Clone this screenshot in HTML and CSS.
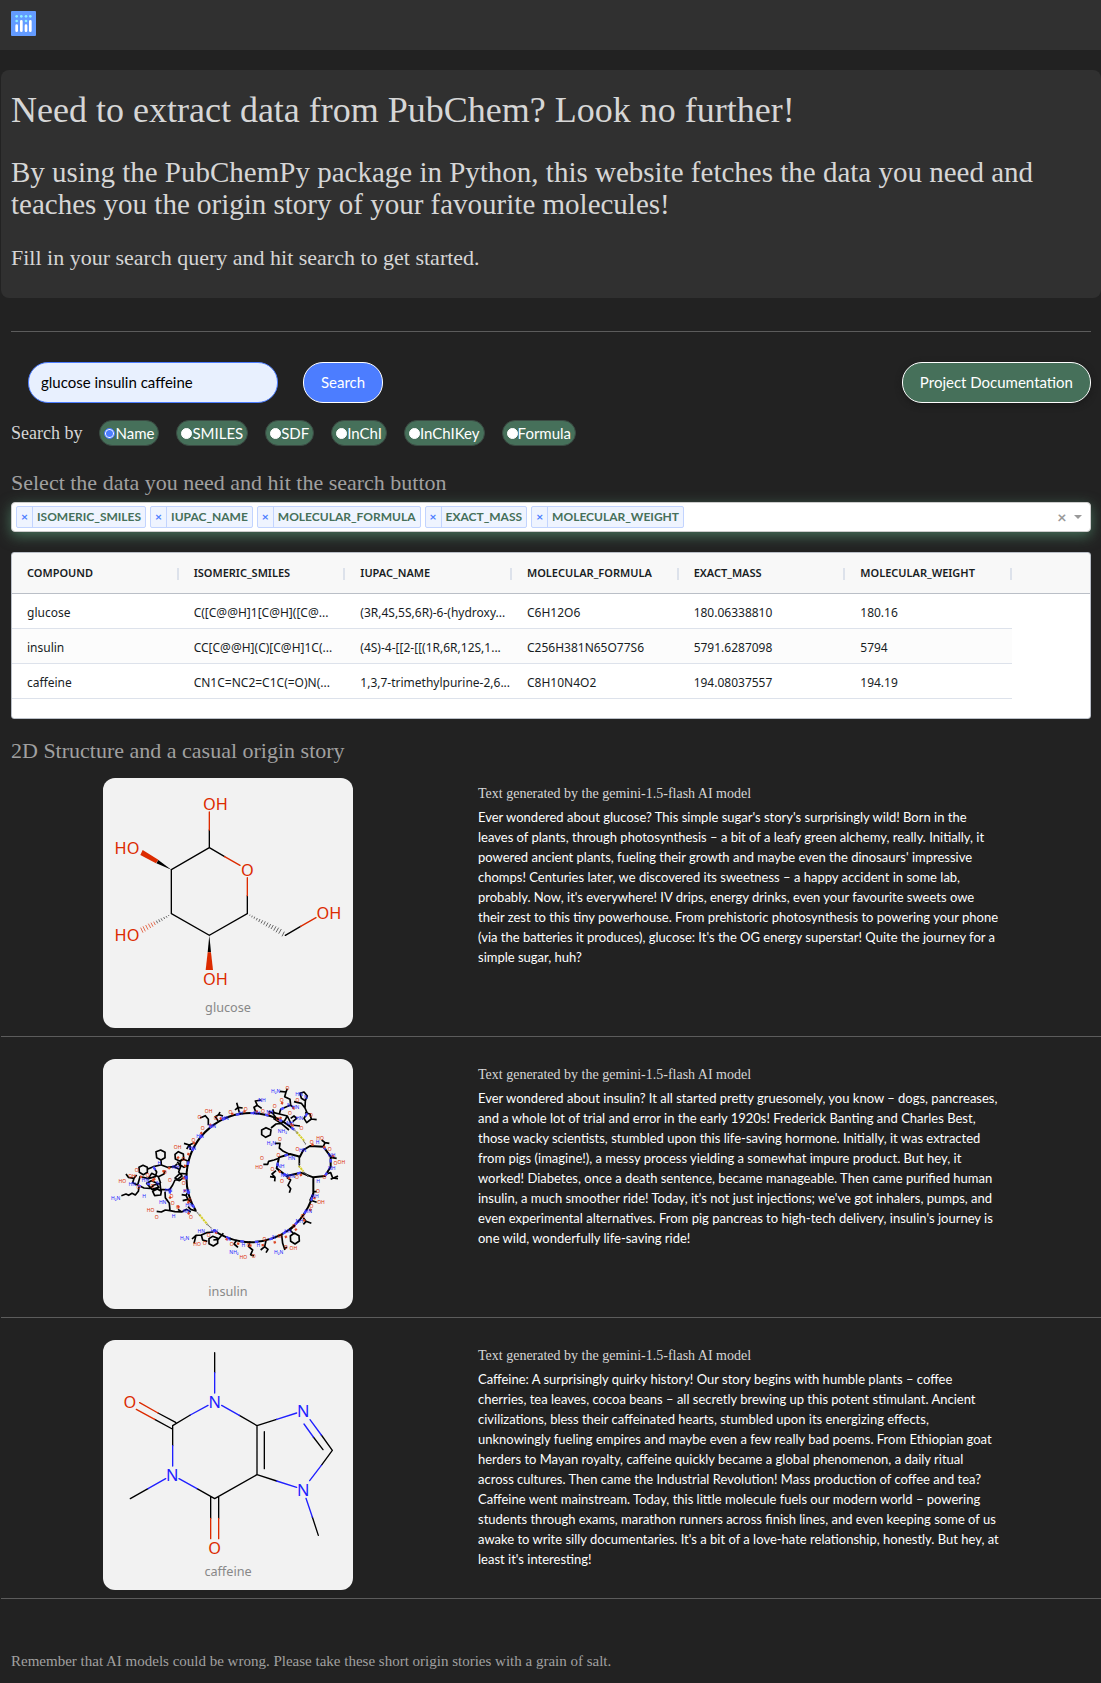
FILE: index.html
```html
<!DOCTYPE html>
<html lang="en">
<head>
<meta charset="utf-8">
<meta name="viewport" content="width=device-width, initial-scale=1">
<title>PubChem data extraction</title>
<link rel="stylesheet" href="styles.css">
</head>
<body>
<header class="topbar">
  <a href="#" class="logo" aria-label="Home">
    <svg viewBox="0 0 75 75" width="25" height="25">
      <rect width="75" height="75" rx="3" fill="#639bff"/>
      <g fill="#8ef0ff"><circle cx="17" cy="16" r="4"/><circle cx="31" cy="16" r="4"/><circle cx="45" cy="16" r="4"/><circle cx="58" cy="16" r="4"/><circle cx="17" cy="30" r="4"/><circle cx="45" cy="30" r="4"/></g>
      <path d="M17 44V59M31 31V59M45 44V59M58 31V59" stroke="#fff" stroke-width="8" stroke-linecap="round"/>
    </svg>
  </a>
</header>
<section class="hero">
  <h1>Need to extract data from PubChem? Look no further!</h1>
  <h2>By using the PubChemPy package in Python, this website fetches the data you need and teaches you the origin story of your favourite molecules!</h2>
  <p>Fill in your search query and hit search to get started.</p>
</section>
<main>
  <div class="content">
    <hr>
    <form class="search-form">
      <div class="search-row">
        <input class="query" type="text" aria-label="Search query" value="glucose insulin caffeine">
        <button class="pill search" type="button">Search</button>
        <a class="pill docs" href="#">Project Documentation</a>
      </div>
      <fieldset class="modes">
        <legend>Search by</legend>
        <label><input type="radio" name="by" checked>Name</label>
        <label><input type="radio" name="by">SMILES</label>
        <label><input type="radio" name="by">SDF</label>
        <label><input type="radio" name="by">InChI</label>
        <label><input type="radio" name="by">InChIKey</label>
        <label><input type="radio" name="by">Formula</label>
      </fieldset>
    </form>
    <h3>Select the data you need and hit the search button</h3>
    <div class="dropdown">
      <span class="tag"><button type="button" aria-label="Remove">×</button><span>ISOMERIC_SMILES</span></span>
      <span class="tag"><button type="button" aria-label="Remove">×</button><span>IUPAC_NAME</span></span>
      <span class="tag"><button type="button" aria-label="Remove">×</button><span>MOLECULAR_FORMULA</span></span>
      <span class="tag"><button type="button" aria-label="Remove">×</button><span>EXACT_MASS</span></span>
      <span class="tag"><button type="button" aria-label="Remove">×</button><span>MOLECULAR_WEIGHT</span></span>
      <button class="clear" type="button" aria-label="Clear all">×</button>
      <button class="open" type="button" aria-label="Open"></button>
    </div>
    <div class="grid">
      <table>
        <thead>
          <tr><th>COMPOUND</th><th>ISOMERIC_SMILES</th><th>IUPAC_NAME</th><th>MOLECULAR_FORMULA</th><th>EXACT_MASS</th><th>MOLECULAR_WEIGHT</th></tr>
        </thead>
        <tbody>
          <tr><td>glucose</td><td>C([C@@H]1[C@H]([C@...</td><td>(3R,4S,5S,6R)-6-(hydroxy...</td><td>C6H12O6</td><td>180.06338810</td><td>180.16</td></tr>
          <tr><td>insulin</td><td>CC[C@@H](C)[C@H]1C(...</td><td>(4S)-4-[[2-[[(1R,6R,12S,1...</td><td>C256H381N65O77S6</td><td>5791.6287098</td><td>5794</td></tr>
          <tr><td>caffeine</td><td>CN1C=NC2=C1C(=O)N(...</td><td>1,3,7-trimethylpurine-2,6...</td><td>C8H10N4O2</td><td>194.08037557</td><td>194.19</td></tr>
        </tbody>
      </table>
    </div>
    <h3>2D Structure and a casual origin story</h3>
  </div>

  <article class="story">
    <svg class="molecule" viewBox="39 39 750 750">
      <g class="bond">
        <path d="M358 248V195M358 248L404 275M358 248L244 314V446L358 511L472 446V392M586 511L632 484"/>
        <path class="o" d="M358 195V141M404 275L450 301M472 392V338M632 484L678 458"/>
      </g>
      <path class="solid" d="M244 314L205 285L199 295Z"/>
      <path class="solid-o" d="M205 284L158 255L151 270L198 295Z"/>
      <path class="solid" d="M358 511L353 562H363Z"/>
      <path class="solid-o" d="M353 562L347 615H369L363 562Z"/>
      <path class="hash" d="M480 449L479 452M487 452L485 457M494 455L492 461M502 459L499 466M510 462L506 471M518 466L513 475M526 469L521 479M534 473L528 484M542 477L536 488M550 480L543 492M558 484L551 497M566 488L558 502M574 492L566 506M583 500L576 514"/>
      <path class="hash" d="M235 450L237 453M228 453L231 458M221 456L224 462M213 460L217 467M206 463L210 471M199 467L203 475"/>
      <path class="hash o" d="M191 470L196 480M183 473L189 485M175 476L182 489M167 480L174 494M159 484L166 499M152 488L159 503"/>
      <g class="atom o">
        <text x="376" y="135">OH</text><text x="111" y="266">HO</text><text x="472" y="332">O</text>
        <text x="717" y="463">OH</text><text x="111" y="529">HO</text><text x="376" y="660">OH</text>
      </g>
      <text class="name" x="414" y="742">glucose</text>
    </svg>
    <div class="tale">
      <h4>Text generated by the gemini-1.5-flash AI model</h4>
      <p>Ever wondered about glucose? This simple sugar's story's surprisingly wild! Born in the leaves of plants, through photosynthesis – a bit of a leafy green alchemy, really. Initially, it powered ancient plants, fueling their growth and maybe even the dinosaurs' impressive chomps! Centuries later, we discovered its sweetness – a happy accident in some lab, probably. Now, it's everywhere! IV drips, energy drinks, even your favourite sweets owe their zest to this tiny powerhouse. From prehistoric photosynthesis to powering your phone (via the batteries it produces), glucose: It's the OG energy superstar! Quite the journey for a simple sugar, huh?</p>
    </div>
  </article>

  <article class="story">
    <svg class="molecule" viewBox="39 27 750 750">
      <g class="chain">
        <!-- backbone -->
        <path class="backbone" d="M612 239A193 193 0 0 0 318 483M370 540A193 193 0 0 0 670 430V382L632 368L590 378L560 355L567 322L600 312L630 320L640 300L660 288L700 290L722 320V350L705 378L670 382"/>
        <!-- side groups, top arc -->
        <path d="M355 226V208L346 197L330 204M384 212L376 200L386 194L399 198M386 194L390 186M448 188L444 172L458 174M444 172L435 180M444 172L440 158M497 185L492 172L502 166L515 175M502 166L496 153L514 150"/>
        <!-- top right cluster -->
        <path d="M550 205L573 220L597 240M573 220L558 222L543 234M515 240L528 233L543 240L541 255L527 262L515 254ZM568 192L552 188L548 178M568 192L572 178L602 165L612 175M602 165L600 148L584 140L588 126L570 124M588 126L592 116M602 205L612 198L620 205L608 215M568 192L592 198L605 225L630 228M612 155L634 160L645 174L652 190L642 205L650 218L664 207L680 209M664 207L660 192L645 188M645 174L646 152L634 145L630 130L642 126L652 138L646 152M536 184L548 190L560 206M592 198L584 212L573 220"/>
        <!-- left arc -->
        <path d="M313 278L298 285L282 280M298 285L290 297M301 300L300 285M265 305L280 312L281 326L269 333L256 327L255 313ZM280 328L292 332L293 346L282 352L271 345V334ZM292 372L270 370L255 384L268 392L285 380M303 457L294 448L278 452M294 448L288 436L275 434M288 436L292 430M262 335L272 350L266 366L276 378L262 388M252 350L262 342"/>
        <!-- left cluster -->
        <path d="M198 305L212 300L225 307V323L213 330L200 323ZM213 330L214 345L232 352L252 350L268 358M147 352L159 346L172 352V367L160 374L148 367ZM172 358L190 350L212 345M190 350L200 366L196 380L175 386L150 380L143 405L128 398L132 385L115 382L108 372M132 385L140 375M143 405L162 414L180 415L192 405L210 400L212 418L238 420L248 405L255 390L272 390M188 424L202 417L214 424L212 435L194 437ZM225 425L226 443L238 460L240 482L226 480L214 486L200 484M240 482L255 485L275 486L290 478L302 486M275 486L264 478M94 437L108 432L116 436L126 430L136 435L145 424L148 405M205 380L222 372L225 362M175 386L185 370L205 380L212 400M170 400L184 392L198 398L206 412L186 418Z"/>
        <!-- right loops -->
        <path d="M597 312L580 304L568 294L570 280L555 280M567 325L552 330L536 334L533 343L520 343M558 362L546 372L555 382L540 380M555 382L554 394M590 382L602 390L594 406L602 416L598 428M640 368L655 378M700 290L705 278L718 280M705 278L695 270M722 322L740 325M708 372L722 368L728 384L744 386M722 388L744 378M628 318V345M670 430L660 450L680 457M680 425H672"/>
        <!-- bottom arc -->
        <path d="M640 503L648 514L664 520M648 514L640 523M615 526L600 540L612 552M601 558L613 549L627 557L628 573L615 582L602 574ZM575 555L578 580L584 598L590 590M528 572L524 590L534 598L528 608M524 590L512 600M480 574L476 590L488 600L482 614L492 618M440 570L432 582L444 592M400 550L385 568L370 570M357 566L368 559L383 565V580L370 588L357 581ZM370 546L350 548L334 555L338 570L352 574M334 555L318 556L306 567M318 556L312 580M318 483L302 478L294 470"/>
      </g>
      <g class="specks-n">
        <path d="M612 239A193 193 0 0 0 318 483M370 540A193 193 0 0 0 670 430"/>
        <path d="M700 290L722 320V350L705 378M632 368L590 378L560 355L567 322L600 312M572 178L602 165M652 190L642 205L650 218M190 350L200 366L196 380M240 420L238 460M143 405L162 414M170 400L206 412"/>
      </g>
      <g class="specks-o">
        <path d="M606 225A202 202 0 0 0 300 470M376 546A186 186 0 0 0 676 432"/>
        <path d="M664 284L700 288L730 320L728 350M636 374L590 386L554 350M573 158L612 175L634 160M150 380L175 386L212 400M190 390L222 362M238 440L264 470L302 494M605 225L632 236M240 352L225 366M262 320L282 345"/>
      </g>
      <path class="sulfur" d="M620 246L644 274M626 347L640 364M328 494L352 523"/>
      <path class="faint" d="M614 240L622 250M640 272L648 284M628 340V352M640 366L655 378M318 484L330 496M350 522L366 536"/>
      <g class="tiny n">
        <text x="557" y="130">H₂N</text><text x="627" y="137">HN</text><text x="648" y="146">N</text><text x="516" y="157">NH</text>
        <text x="453" y="194">H</text><text x="405" y="211">HN</text><text x="367" y="233">HN</text><text x="330" y="263">HN</text><text x="307" y="300">HN</text>
        <text x="500" y="195">NH</text><text x="540" y="192">NH</text><text x="577" y="248">NH₂</text><text x="600" y="225">NH</text><text x="617" y="178">HN</text><text x="597" y="170">N</text><text x="629" y="210">HN</text>
        <text x="544" y="285">H₂N</text><text x="638" y="307">HN</text><text x="683" y="282">H</text><text x="725" y="321">NH</text><text x="725" y="361">NH</text><text x="684" y="398">H</text>
        <text x="605" y="329">HN</text><text x="572" y="353">NH</text><text x="583" y="380">NH</text><text x="604" y="384">HN</text>
        <text x="77" y="449">H₂N</text><text x="127" y="409">HN</text><text x="162" y="444">H</text><text x="218" y="463">HN</text><text x="251" y="504">H</text><text x="288" y="387">N</text><text x="257" y="358">NH</text><text x="208" y="346">H</text><text x="236" y="427">HN</text><text x="290" y="489">NH</text><text x="297" y="472">HN</text><text x="290" y="430">HN</text><text x="204" y="405">N</text><text x="166" y="397">HN</text>
        <text x="284" y="571">H₂N</text><text x="334" y="549">HN</text><text x="373" y="549">HN</text><text x="417" y="572">N</text><text x="432" y="612">NH₂</text><text x="460" y="591">H</text><text x="505" y="591">H</text><text x="552" y="568">N</text><text x="594" y="549">HN</text><text x="566" y="612">H₂N</text><text x="628" y="520">NH</text><text x="655" y="490">HN</text><text x="675" y="445">NH</text>
      </g>
      <g class="tiny o">
        <text x="592" y="119">O</text><text x="575" y="156">O</text><text x="554" y="174">O</text><text x="622" y="157">O</text><text x="663" y="202">O</text><text x="634" y="241">O</text><text x="600" y="195">O</text><text x="563" y="212">O</text><text x="467" y="183">O</text><text x="519" y="188">O</text><text x="421" y="191">O</text><text x="377" y="210">O</text><text x="338" y="239">O</text><text x="310" y="275">O</text>
        <text x="356" y="190">OH</text><text x="328" y="206">O</text><text x="263" y="298">OH</text><text x="280" y="332">O</text><text x="281" y="404">O</text><text x="298" y="456">O</text>
        <text x="570" y="272">O</text><text x="507" y="357">HO</text><text x="516" y="331">O</text><text x="565" y="322">O</text><text x="622" y="302">O</text><text x="665" y="281">O</text><text x="690" y="269">HO</text><text x="719" y="302">O</text><text x="754" y="342">OH</text><text x="736" y="344">O</text><text x="703" y="386">O</text><text x="621" y="386">O</text><text x="576" y="400">O</text><text x="547" y="362">O</text><text x="684" y="429">O</text><text x="693" y="461">OH</text><text x="664" y="475">O</text><text x="638" y="505">O</text>
        <text x="97" y="399">HO</text><text x="140" y="367">O</text><text x="126" y="383">OH</text><text x="145" y="417">O</text><text x="173" y="380">O</text><text x="225" y="373">O</text><text x="240" y="395">O</text><text x="244" y="444">O</text><text x="182" y="485">HO</text><text x="200" y="506">O</text><text x="264" y="477">O</text><text x="303" y="507">O</text><text x="248" y="464">O</text><text x="187" y="414">O</text>
        <text x="321" y="587">HO</text><text x="344" y="584">O</text><text x="356" y="562">O</text><text x="425" y="588">O</text><text x="476" y="591">O</text><text x="460" y="627">HO</text><text x="491" y="625">O</text><text x="523" y="573">O</text><text x="568" y="564">O</text><text x="588" y="596">O</text><text x="610" y="599">OH</text><text x="612" y="533">O</text>
      </g>
      <text class="name" x="414" y="739">insulin</text>
    </svg>
    <div class="tale">
      <h4>Text generated by the gemini-1.5-flash AI model</h4>
      <p>Ever wondered about insulin? It all started pretty gruesomely, you know – dogs, pancreases, and a whole lot of trial and error in the early 1920s! Frederick Banting and Charles Best, those wacky scientists, stumbled upon this life-saving hormone. Initially, it was extracted from pigs (imagine!), a messy process yielding a somewhat impure product. But hey, it worked! Diabetes, once a death sentence, became manageable. Then came purified human insulin, a much smoother ride! Today, it's not just injections; we've got inhalers, pumps, and even experimental alternatives. From pig pancreas to high-tech delivery, insulin's journey is one wild, wonderfully life-saving ride!</p>
    </div>
  </article>

  <article class="story">
    <svg class="molecule" viewBox="39 45 750 750">
      <g class="bond">
        <path d="M374 83V143M248 302L301 270M248 302V362M257 292L204 264M247 312L194 283M374 521L321 491M374 521L501 449V302L448 271M523 320V431M501 302L560 283M501 449L560 468M727 376L694 421M727 376L694 330M699 374L670 336M362 516V580M386 516V580M121 521L174 491M685 631L667 576"/>
        <path class="n" d="M374 143V204M301 270L354 241M248 362V423M321 491L267 461M448 271L395 241M560 283L620 264M560 468L620 487M694 421L659 467M694 330L660 284M670 336L642 297M174 491L227 461M667 576L648 520"/>
        <path class="o" d="M204 264L149 233M194 283L139 253M362 580V641M386 580V641"/>
      </g>
      <g class="atom n"><text x="374" y="249">N</text><text x="247" y="468">N</text><text x="640" y="276">N</text><text x="640" y="514">N</text></g>
      <g class="atom o"><text x="120" y="249">O</text><text x="374" y="688">O</text></g>
      <text class="name" x="414" y="752">caffeine</text>
    </svg>
    <div class="tale">
      <h4>Text generated by the gemini-1.5-flash AI model</h4>
      <p>Caffeine: A surprisingly quirky history! Our story begins with humble plants – coffee cherries, tea leaves, cocoa beans – all secretly brewing up this potent stimulant. Ancient civilizations, bless their caffeinated hearts, stumbled upon its energizing effects, unknowingly fueling empires and maybe even a few really bad poems. From Ethiopian goat herders to Mayan royalty, caffeine quickly became a global phenomenon, a daily ritual across cultures. Then came the Industrial Revolution! Mass production of coffee and tea? Caffeine went mainstream. Today, this little molecule fuels our modern world – powering students through exams, marathon runners across finish lines, and even keeping some of us awake to write silly documentaries. It's a bit of a love-hate relationship, honestly. But hey, at least it's interesting!</p>
    </div>
  </article>
</main>
<footer>Remember that AI models could be wrong. Please take these short origin stories with a grain of salt.</footer>
</body>
</html>
```
FILE: styles.css
```css
* { box-sizing: border-box; }

body {
  margin: 0;
  background: #222;
  color: #fff;
  font: 15px/20px Lato, sans-serif;
}

h1, h2, h3, h4, .hero p, .modes legend, footer {
  margin: 0;
  font-family: "Liberation Serif", serif;
  font-weight: 400;
}

.topbar { height: 50px; padding: 11px; background: #303030; }
.logo { display: block; width: 25px; height: 25px; }
.logo svg { display: block; }

.hero {
  margin: 20px 0 0 1px;
  padding: 20px 30px 24px 10px;
  border-radius: 8px;
  background: #303030;
  color: #d6d6d6;
}
.hero h1 { font-size: 36px; line-height: 40px; }
.hero h2 { margin-top: 26px; font-size: 29px; line-height: 32px; }
.hero p { margin-top: 22px; font-size: 22px; line-height: 32px; }

.content { padding: 33px 10px 0 11px; }
hr { height: 1px; margin: 0 0 30px; border: 0; background: #5c5c5c; }

.search-row { display: flex; padding-left: 17px; }
.query {
  width: 250px;
  height: 41px;
  padding: 0 12px 2px;
  border: 1px solid #4c7dff;
  border-radius: 20px;
  background: #e8f0fe;
  color: #000;
  font: 15px/20px Lato, sans-serif;
}
.pill {
  height: 41px;
  padding: 0 17px;
  border: 1px solid #fff;
  border-radius: 20px;
  color: #fff;
  font: 15px/39px Lato, sans-serif;
  text-decoration: none;
}
.search { margin-left: 25px; background: #4c7dff; }
.docs { margin-left: auto; background: #46705a; box-shadow: 0 2px 6px #1a1a1a; }

.modes {
  display: flex;
  align-items: center;
  gap: 17px;
  margin: 17px 0 0;
  padding: 0;
  border: 0;
}
.modes legend { float: left; padding: 0; color: #d6d6d6; font-size: 18px; }
.modes label {
  display: flex;
  align-items: center;
  height: 26px;
  padding: 0 4px;
  border: 1px solid #3a4a42;
  border-radius: 13px;
  background: #46705a;
}
.modes input {
  appearance: none;
  width: 11px;
  height: 11px;
  margin: 0;
  border: 1px solid #fff;
  border-radius: 50%;
  background: #fff;
}
.modes input:checked { border-color: #4c7dff; background: #4c7dff; box-shadow: inset 0 0 0 1px #fff; }

h3 { color: #a0a0a0; font-size: 22px; line-height: 24px; }
.content h3 { margin: 25px 0 7px; }

.dropdown {
  display: flex;
  align-items: center;
  gap: 4px;
  height: 30px;
  padding: 0 8px 0 4px;
  border: 1px solid #ccc;
  border-radius: 4px;
  background: #fff;
  box-shadow: 0 4px 14px #46705a;
}
.tag {
  display: flex;
  height: 22px;
  border: 1px solid #c2d4ff;
  border-radius: 2px;
  background: #eff4ff;
  color: #46705a;
  font: 700 12px/20px Lato, sans-serif;
}
.tag span { padding: 0 4px; }
.tag button {
  width: 16px;
  padding: 0;
  border: 0;
  border-right: 1px solid #c2d4ff;
  background: none;
  color: #4c7dff;
  font: 700 12px/18px Lato, sans-serif;
}
.clear, .open { padding: 0; border: 0; background: none; }
.clear { width: 10px; margin-left: auto; color: #999; font: 700 16px/20px Lato, sans-serif; }
.open {
  width: 8px;
  height: 4px;
  margin: 0 0 0 3px;
  background: #999;
  clip-path: polygon(0 0, 100% 0, 50% 100%);
}

.grid {
  height: 167px;
  margin-top: 20px;
  border: 1px solid #babfc7;
  border-radius: 3px;
  overflow: hidden;
  background: linear-gradient(#f8f8f8 40px, #babfc7 40px, #babfc7 41px, #fff 41px);
  color: #181d1f;
  font: 12px/30px "Noto Sans", sans-serif;
}
.grid table { width: 1000px; border-collapse: separate; border-spacing: 0; table-layout: fixed; }
.grid th {
  height: 41px;
  padding: 0 15px 2px;
  text-align: left;
  font-size: 11px;
  font-weight: 600;
  background: linear-gradient(#dde2eb, #dde2eb) right center / 2px 12px no-repeat;
}
.grid td { height: 35px; padding: 4px 10px 0 15px; border-bottom: 1px solid #dde2eb; white-space: nowrap; }
.grid tr:nth-child(even) td { background: #fcfcfc; }
.content .grid + h3 { margin: 20px 0 0; }

.story {
  display: flex;
  gap: 125px;
  margin: 22px 0 0 1px;
  padding: 0 101px 8px 102px;
  border-bottom: 1px solid #5c5c5c;
}
.content + .story { margin-top: 15px; }
.molecule { flex: none; width: 250px; height: 250px; border-radius: 12px; background: #f2f2f2; }
.tale { padding-top: 6px; }
.tale h4 { color: #d6d6d6; font-size: 14px; line-height: 20px; }
.tale p { margin: 3px 0 0; font-size: 13px; }

footer { padding: 52px 10px 10px 11px; color: #a0a0a0; font-size: 15px; }

.bond { fill: none; stroke: #000; stroke-width: 4; stroke-linecap: round; }
.bond .o, .hash.o { stroke: #dc2b00; }
.bond .n { stroke: #2020ff; }
.hash { stroke: #222; stroke-width: 2; }
.solid { fill: #000; }
.solid-o { fill: #dc2b00; }
.atom { font: 49px "Noto Sans", sans-serif; text-anchor: middle; }
text.name { fill: #888; font: 38px "Noto Sans", sans-serif; text-anchor: middle; }
g.o { fill: #dc2b00; }
g.n { fill: #2020ff; }
.chain { fill: none; stroke: #000; stroke-width: 5; stroke-linejoin: round; }
.backbone { stroke-width: 6; }
.specks-n, .specks-o { fill: none; stroke-width: 7; }
.specks-n { stroke: #4848ff; stroke-dasharray: 11 33; }
.specks-o { stroke: #dc4a28; stroke-dasharray: 7 30; }
.sulfur { fill: none; stroke: #d6cf2a; stroke-width: 6; stroke-dasharray: 7 2; }
.faint { fill: none; stroke: #666; stroke-width: 4; stroke-dasharray: 3 2; }
.tiny { font: 15px "Noto Sans", sans-serif; text-anchor: middle; }
```
